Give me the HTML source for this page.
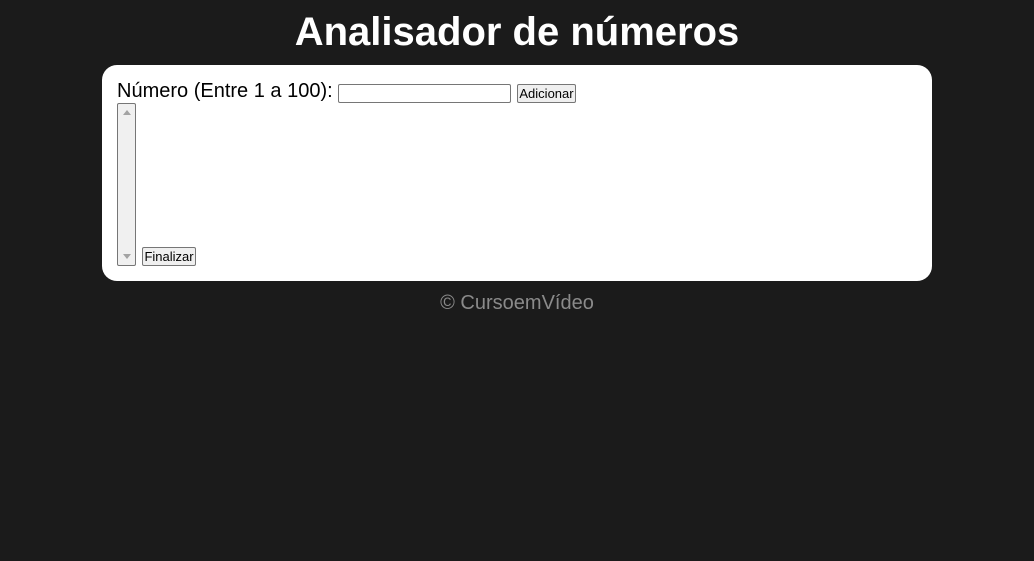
<!DOCTYPE html>
<html><head><meta charset="utf-8"><style>
body{margin:0;background:#1b1b1b;width:1034px;height:561px;position:relative;font-family:"Liberation Sans",Arial,sans-serif;overflow:hidden}
h1{position:absolute;left:0;width:1034px;top:9px;margin:0;text-align:center;color:#fff;font-size:40px;font-weight:bold;line-height:46px}
.card{position:absolute;left:102px;top:65px;width:830px;height:216px;background:#fff;border-radius:15px}
.lbl{position:absolute;left:117px;top:79px;font-size:20px;color:#000;line-height:24px}
.inp{position:absolute;left:338px;top:84px;width:171px;height:17px;border:1px solid #767676;border-radius:2px;background:#fff}
.btn{position:absolute;height:17px;border:1px solid #767676;border-radius:2px;background:#efefef;font-size:13px;line-height:17px;text-align:center;color:#000}
.sel{position:absolute;left:117px;top:103px;width:17px;height:161px;border:1px solid #767676;border-radius:2px;background:#f0f0f0}
.up,.dn{position:absolute;left:5px;width:0;height:0;border-left:4px solid transparent;border-right:4px solid transparent}
.up{top:6px;border-bottom:5px solid #a3a3a3}
.dn{bottom:6px;border-top:5px solid #a3a3a3}
.foot{position:absolute;left:0;width:1034px;top:291px;text-align:center;color:#8a8a8a;font-size:20px;line-height:24px}
</style></head><body>
<h1>Analisador de números</h1>
<div class="card"></div>
<div class="lbl">Número (Entre 1 a 100):</div>
<div class="inp"></div>
<div class="btn" style="left:517px;top:84px;width:57px">Adicionar</div>
<div class="sel"><div class="up"></div><div class="dn"></div></div>
<div class="btn" style="left:142px;top:247px;width:52px">Finalizar</div>
<div class="foot">© CursoemVídeo</div>
</body></html>
